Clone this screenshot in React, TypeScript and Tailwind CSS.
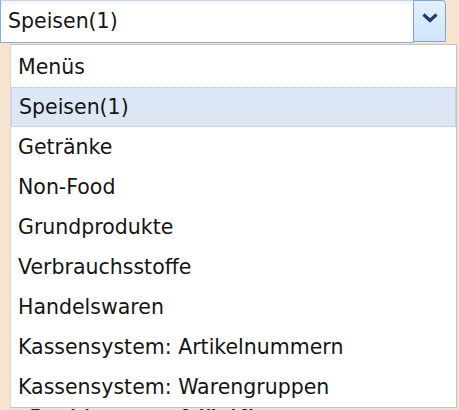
const ITEMS = [
  "Menüs",
  "Speisen(1)",
  "Getränke",
  "Non-Food",
  "Grundprodukte",
  "Verbrauchsstoffe",
  "Handelswaren",
  "Kassensystem: Artikelnummern",
  "Kassensystem: Warengruppen",
];

const font = "font-['DejaVu_Sans',Verdana,sans-serif]";

export default function App() {
  const selected = "Speisen(1)";
  return (
    <div className={`relative w-[459px] h-[410px] overflow-hidden bg-[#f7e4d0] ${font}`}>
      {/* combo box */}
      <div className="flex h-[43px] w-[451px]">
        <div className="flex items-center w-[414px] h-full bg-white border border-[#86aedd] border-t-[#c9d6e6] pl-[7px] text-[20.5px] text-[#151515] bg-gradient-to-b from-[#eef2f6] from-0% to-white to-[12%]">
          {selected}
        </div>
        <div className="flex items-start justify-center w-[33px] h-[42px] -ml-px rounded-tr-[4px] border border-[#7ca6d8] bg-gradient-to-b from-[#e4f0fd] to-[#cfe4fa] pt-[12px]">
          <svg width="16" height="10" viewBox="0 0 16 10">
            <path d="M1.5 1.5 L8 7.5 L14.5 1.5" fill="none" stroke="#1f3c6a" strokeWidth="3.2" strokeLinejoin="miter" />
          </svg>
        </div>
      </div>

      {/* content beneath the list */}
      <div className="absolute left-[30px] top-[408px] text-[15px] font-bold leading-none text-[#1b1b1b] whitespace-nowrap">
        Bezeichnung &nbsp;&nbsp;&nbsp;&nbsp;&nbsp;&nbsp; Artikel Nummer
      </div>

      {/* dropdown list */}
      <div className="absolute left-[10px] top-[44px] w-[447px] h-[364px] bg-white border border-[#c4c4c4] border-l-[#d9d9d9] pt-[2px] shadow-[1px_1px_0_#e2e2e2]">
        {ITEMS.map((it) => (
          <div
            key={it}
            className={
              "flex items-center h-[40px] pl-[7px] text-[20.5px] text-[#151515] " +
              (it === selected ? "bg-[#dde7f6] border border-dotted border-[#a7c1ea] pl-[6px]" : "")
            }
          >
            {it}
          </div>
        ))}
      </div>
    </div>
  );
}
